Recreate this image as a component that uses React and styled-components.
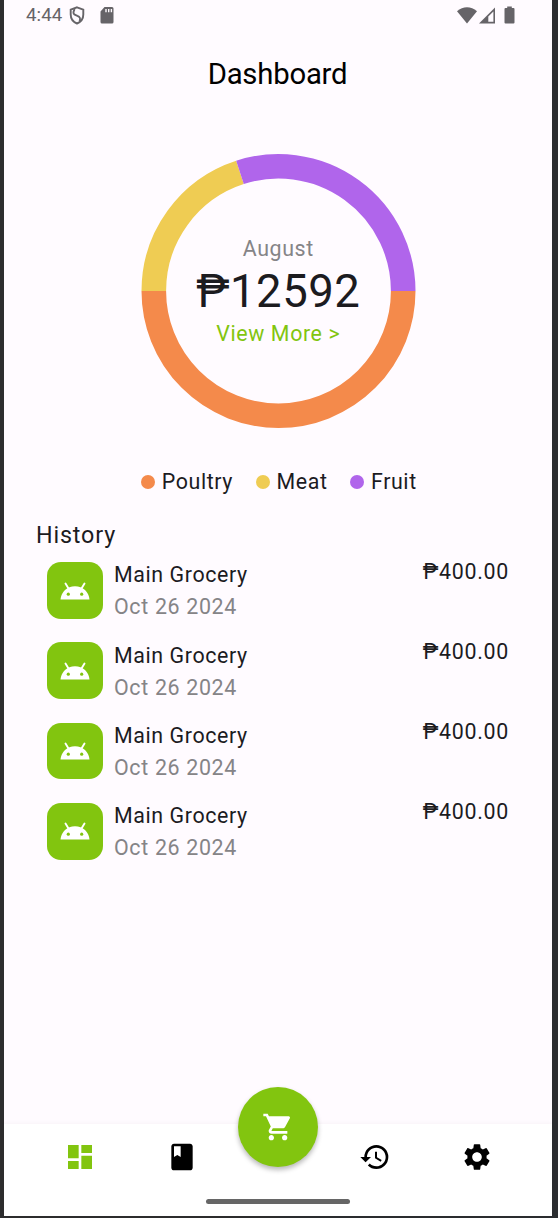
import React from "react";
import styled, { createGlobalStyle } from "styled-components";
import { MdDashboard, MdClass, MdHistory, MdSettings, MdShoppingCart } from "react-icons/md";

const GlobalStyle = createGlobalStyle`
  * { box-sizing: border-box; }
  body { margin: 0; background: #2b2c2f; font-family: Roboto, sans-serif; }
`;

const Frame = styled.div`
  width: 558px;
  height: 1218px;
  padding: 0 6px 2px 4px;
  background: linear-gradient(to right, #2d2d2e 50%, #2b2d30 50%);
`;

const Screen = styled.main`
  display: flex;
  flex-direction: column;
  height: 1216px;
  background: #fffbff;
  color: #1c1b1f;
  font-size: 21.4px;
  letter-spacing: 0.6px;
  white-space: nowrap;
`;

const StatusBar = styled.header`
  display: flex;
  justify-content: space-between;
  height: 30px;
  padding: 0 37px 0 22px;
  color: #666468;
`;

const StatusGroup = styled.div`
  display: flex;
  align-items: center;
  height: 30px;
  font-size: 18.7px;
  letter-spacing: 0.1px;
`;

const StatusIcon = styled.svg`
  flex: none;
  margin-left: ${({ $gap }) => $gap}px;
`;

const Title = styled.h1`
  margin: 26px 1px 0 0;
  height: 36px;
  line-height: 36px;
  text-align: center;
  font-size: 29.3px;
  font-weight: 400;
  letter-spacing: -0.22px;
  color: #000;
`;

const Chart = styled.section`
  display: grid;
  place-items: center;
  height: 276px;
  margin-top: 61px;
  > * { grid-area: 1 / 1; }
`;

const Summary = styled.div`
  display: flex;
  flex-direction: column;
  align-items: center;
  padding-left: 0.6px;
  line-height: 32px;
`;

const Muted = styled.span`
  color: #858487;
`;

const Total = styled.strong`
  font-size: 45.5px;
  font-weight: 400;
  line-height: 53px;
  letter-spacing: 0.5px;
`;

const MoreLink = styled.a`
  color: #82c50f;
`;

const Legend = styled.ul`
  display: flex;
  justify-content: center;
  gap: 22.5px;
  margin: 37px 0 0;
  padding: 0 0 0 1.6px;
  list-style: none;
  line-height: 32px;
`;

const LegendItem = styled.li`
  display: flex;
  align-items: center;
  gap: 7px;
  letter-spacing: 0.58px;
  &::before {
    content: "";
    width: 14px;
    height: 14px;
    border-radius: 50%;
    background: ${({ $color }) => $color};
  }
`;

const History = styled.section`
  flex: 1;
  padding: 20.6px 43px 0 32px;
`;

const SectionTitle = styled.h2`
  margin: 0;
  font-size: 23.3px;
  font-weight: 400;
  line-height: 32px;
  letter-spacing: 0.85px;
`;

const Entry = styled.article`
  display: flex;
  height: 80.2px;
  padding: 11.7px 0 0 10.7px;
`;

const Tile = styled.div`
  display: grid;
  place-items: center;
  width: 56.8px;
  height: 56.8px;
  border-radius: 14px;
  background: #82c50f;
`;

const EntryText = styled.div`
  display: flex;
  flex: 1;
  flex-direction: column;
  margin: -2.9px 0 0 10.5px;
  line-height: 32px;
`;

const EntryDate = styled(Muted)`
  letter-spacing: 0.67px;
`;

const Amount = styled.span`
  margin-top: -6.5px;
  line-height: 32px;
  letter-spacing: 0.7px;
`;

const NavBar = styled.footer`
  display: flex;
  flex-direction: column;
  align-items: center;
  height: 92.5px;
  background: #fff;
  box-shadow: 0 -1px 4px rgba(60, 0, 40, 0.035);
`;

const NavItems = styled.nav`
  display: grid;
  grid-template-columns: 102px 102px 91px 102px 102px;
  height: 68px;
`;

const NavItem = styled.button`
  display: grid;
  place-items: center;
  padding: 0 0 0.8px;
  border: 0;
  background: none;
  color: ${({ $active }) => ($active ? "#82c50f" : "#000")};
`;

const CartButton = styled.button`
  display: grid;
  place-items: center;
  width: 80px;
  height: 80px;
  margin-top: -37px;
  justify-self: center;
  padding: 0;
  border: 0;
  border-radius: 50%;
  background: #82c50f;
  color: #fff;
  box-shadow: 0 3px 5px rgba(0, 0, 0, 0.28);
`;

const HomeHandle = styled.div`
  width: 144px;
  height: 5px;
  margin-top: 7.5px;
  border-radius: 3px;
  background: #666;
`;

const categories = [
  { name: "Poultry", color: "#f48a4b", path: "M262.2 138A124.7 124.7 0 0 1 12.8 138" },
  { name: "Meat", color: "#efcc53", path: "M12.8 138A124.7 124.7 0 0 1 98.97 19.4" },
  { name: "Fruit", color: "#b065eb", path: "M98.97 19.4A124.7 124.7 0 0 1 262.2 138" },
];

const entries = [1, 2, 3, 4].map((id) => ({
  id,
  name: "Main Grocery",
  date: "Oct 26 2024",
  amount: "₱400.00",
}));

function AndroidHead() {
  return (
    <svg width="30" height="18" viewBox="0 0 30 18">
      <path d="M.5 17.5C1.2 9.8 7 4.2 15 4.2S28.8 9.8 29.5 17.5Z" fill="#fff" />
      <path d="M5.5 1.5 8.8 7M24.5 1.5 21.2 7" stroke="#fff" strokeWidth="1.9" strokeLinecap="round" />
      <circle cx="8.3" cy="12.2" r="1.6" fill="#82c50f" />
      <circle cx="21.7" cy="12.2" r="1.6" fill="#82c50f" />
    </svg>
  );
}

export default function App() {
  return (
    <Frame>
      <GlobalStyle />
      <Screen>
        <StatusBar>
          <StatusGroup>
            4:44
            <StatusIcon $gap={7} width="16" height="19" viewBox="0 0 16 19" fill="none" stroke="currentColor" strokeWidth="1.9">
              <path d="M8 1.3 14.3 3.7V8.5C14.3 12.9 11.7 16 8 17.5 4.3 16 1.7 12.9 1.7 8.5V3.7Z" />
              <path d="M5.6 3C2.8 8.6 5.6 8.6 8.4 9.8 11.4 11 11.6 12.4 10.6 15" />
            </StatusIcon>
            <StatusIcon $gap={14.5} width="14" height="17" viewBox="0 0 14 17" fill="currentColor">
              <path fillRule="evenodd" d="M4.5 0H12Q13.500 0 13.500 1.500V15Q13.500 16.500 12 16.500H2Q.5 16.500.5 15V4.500ZM5.300 2V5.200H6.700V2ZM8 2V5.200H9.400V2ZM10.700 2V5.200H12.100V2Z" />
            </StatusIcon>
          </StatusGroup>
          <StatusGroup>
            <StatusIcon $gap={0} width="20" height="17" viewBox="0 0 20 17" fill="currentColor">
              <path d="M0 4.2C6-1 14-1 20 4.2L10 16.5Z" />
            </StatusIcon>
            <StatusIcon $gap={2} width="16" height="17" viewBox="0 0 16 17" fill="currentColor">
              <path fillRule="evenodd" d="M0 16.5 16 .5V16.5ZM9.3 9.6V14.8H14.4V4.5Z" />
            </StatusIcon>
            <StatusIcon $gap={9.5} width="11" height="18" viewBox="0 0 11 18" fill="currentColor">
              <path d="M3.2.5H7.8V2H9.5Q10.500 2 10.500 3V16.500Q10.500 17.500 9.500 17.500H1.500Q.5 17.500.5 16.500V3Q.5 2 1.500 2H3.200Z" />
            </StatusIcon>
          </StatusGroup>
        </StatusBar>

        <Title>Dashboard</Title>

        <Chart>
          <svg width="275" height="276" viewBox="0 0 275 276" fill="none" strokeWidth="24.6">
            {categories.map((c) => (
              <path key={c.name} d={c.path} stroke={c.color} />
            ))}
          </svg>
          <Summary>
            <Muted>August</Muted>
            <Total>₱12592</Total>
            <MoreLink>View More &gt;</MoreLink>
          </Summary>
        </Chart>

        <Legend>
          {categories.map((c) => (
            <LegendItem key={c.name} $color={c.color}>{c.name}</LegendItem>
          ))}
        </Legend>

        <History>
          <SectionTitle>History</SectionTitle>
          {entries.map((e) => (
            <Entry key={e.id}>
              <Tile><AndroidHead /></Tile>
              <EntryText>
                <span>{e.name}</span>
                <EntryDate>{e.date}</EntryDate>
              </EntryText>
              <Amount>{e.amount}</Amount>
            </Entry>
          ))}
        </History>

        <NavBar>
          <NavItems>
            <NavItem $active aria-label="Dashboard"><MdDashboard size={32} /></NavItem>
            <NavItem aria-label="Records"><MdClass size={32} /></NavItem>
            <CartButton aria-label="Cart"><MdShoppingCart size={32} /></CartButton>
            <NavItem aria-label="History"><MdHistory size={32} /></NavItem>
            <NavItem aria-label="Settings"><MdSettings size={32} /></NavItem>
          </NavItems>
          <HomeHandle />
        </NavBar>
      </Screen>
    </Frame>
  );
}
